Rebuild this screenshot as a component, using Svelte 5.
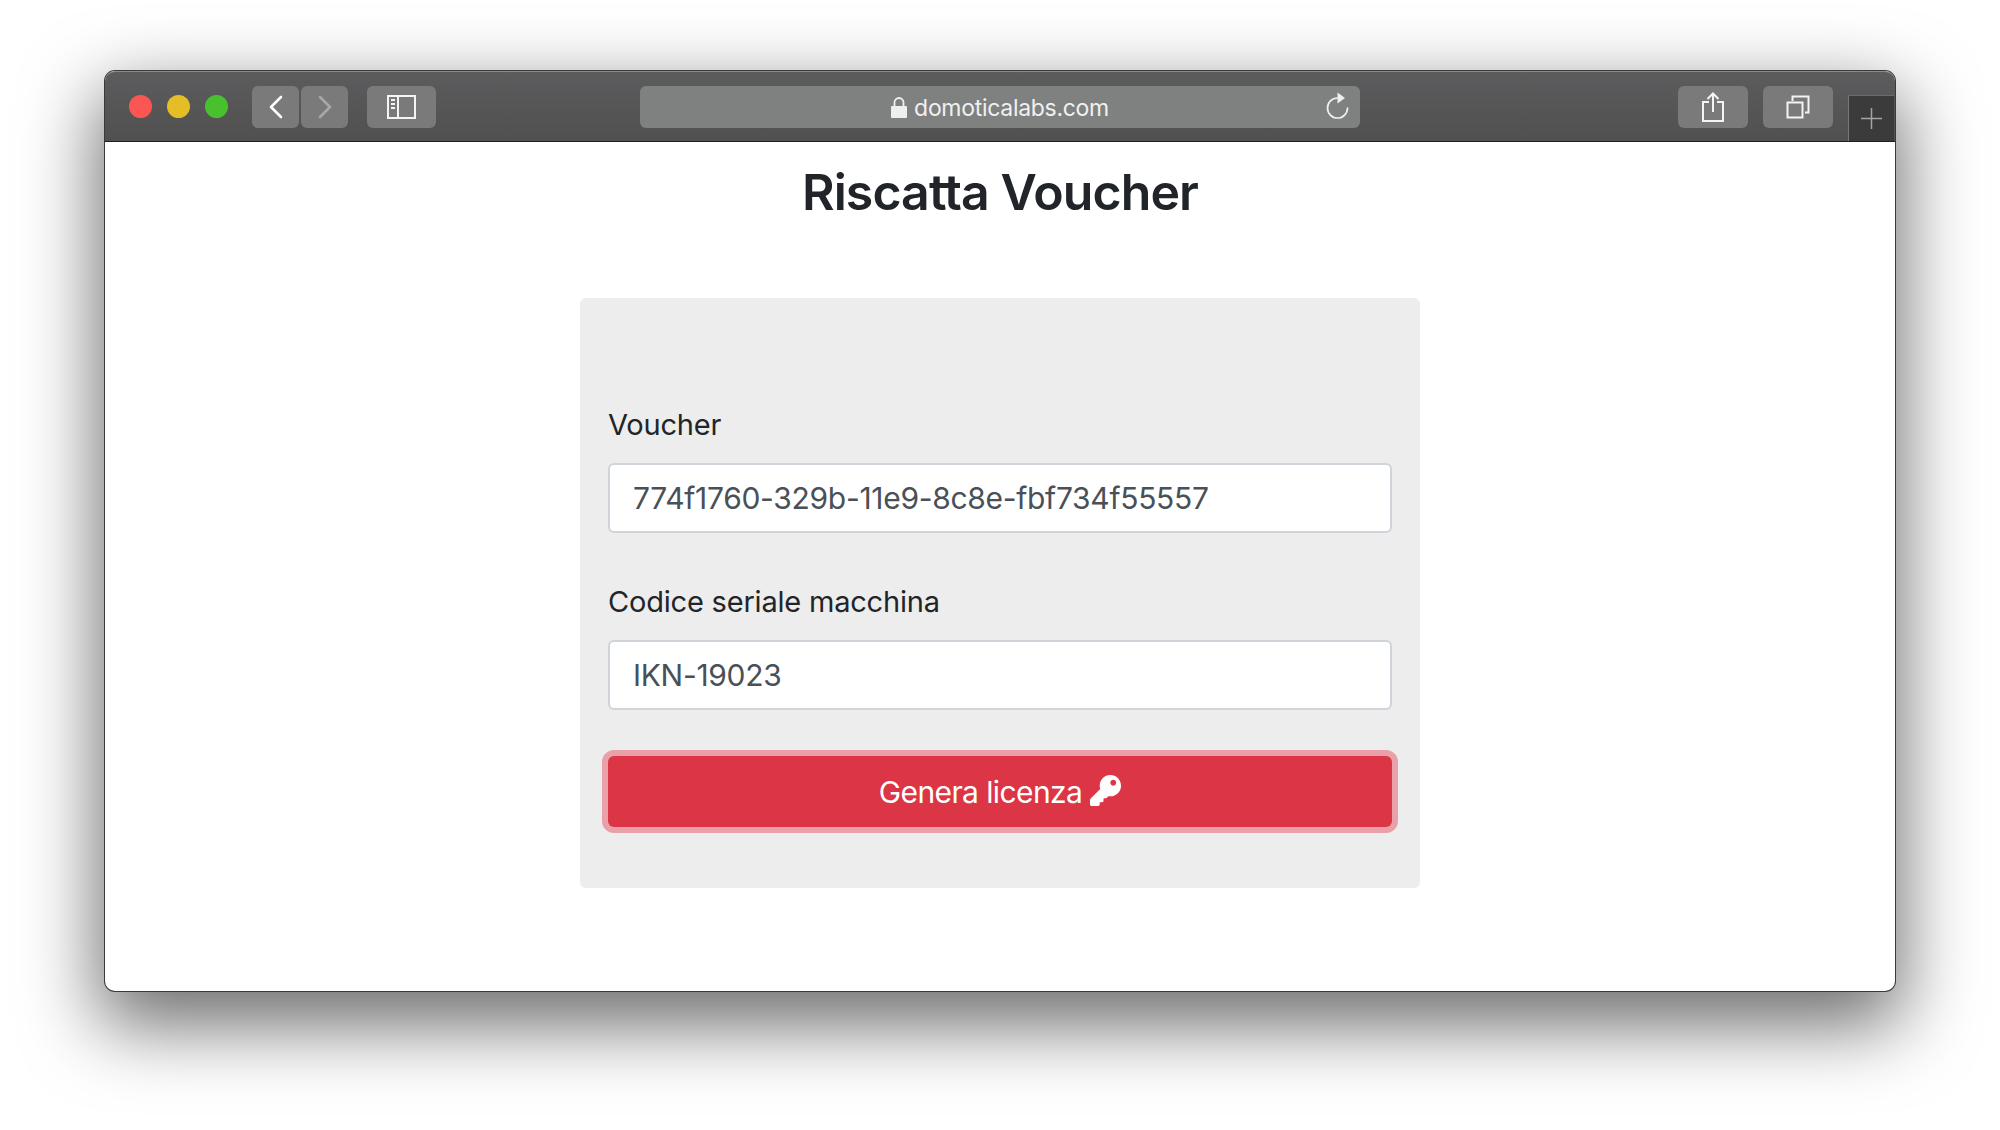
<script>
  let voucher = $state('774f1760-329b-11e9-8c8e-fbf734f55557');
  let serial = $state('IKN-19023');
</script>

<div class="window">
  <header class="bar">
    <div class="lights">
      <span class="light red"></span>
      <span class="light yellow"></span>
      <span class="light green"></span>
    </div>
    <div class="nav">
      <span class="tool nav-btn">
        <svg width="16" height="24" viewBox="0 0 16 24"><path d="M13 2 3 12l10 10" fill="none" stroke="#fff" stroke-width="2.6" stroke-linecap="round" stroke-linejoin="round"/></svg>
      </span>
      <span class="tool nav-btn">
        <svg width="16" height="24" viewBox="0 0 16 24"><path d="m3 2 10 10L3 22" fill="none" stroke="#a8a8a8" stroke-width="2.6" stroke-linecap="round" stroke-linejoin="round"/></svg>
      </span>
    </div>
    <span class="tool side-btn">
      <svg width="29" height="24" viewBox="0 0 29 24"><path d="M1 1h27v22H1zM11 1v22" fill="none" stroke="#f4f4f4" stroke-width="2"/><path d="M4 5h4M4 9h4M4 13h4" stroke="#f4f4f4" stroke-width="2"/></svg>
    </span>
    <div class="address">
      <svg class="lock" width="16" height="21" viewBox="0 0 16 21"><path d="M1 9h14a1 1 0 0 1 1 1v10a1 1 0 0 1-1 1H1a1 1 0 0 1-1-1V10a1 1 0 0 1 1-1z" fill="#efefef"/><path d="M3.5 9V5.5a4.5 4.5 0 0 1 9 0V9" fill="none" stroke="#efefef" stroke-width="1.8"/></svg>
      <span class="host">domoticalabs.com</span>
      <svg class="reload" width="24" height="28" viewBox="0 0 24 28"><path d="M11.500 6A10 10 0 1 0 21.500 16" fill="none" stroke="#efefef" stroke-width="1.7" stroke-linecap="round"/><path d="M11.500.5l7.500 5.500-7.500 5.500z" fill="#efefef"/></svg>
    </div>
    <span class="tool right-btn">
      <svg width="22" height="30" viewBox="0 0 22 30"><path d="M7 10H1v19h20V10h-6M11 20V2M5.500 7 11 1.500 16.500 7" fill="none" stroke="#f4f4f4" stroke-width="2"/></svg>
    </span>
    <span class="tool right-btn">
      <svg width="24" height="24" viewBox="0 0 24 24"><path d="M1.500 7.500h15v15h-15z" fill="none" stroke="#f4f4f4" stroke-width="2"/><path d="M6.500 6V1.500h16v16H19" fill="none" stroke="#f4f4f4" stroke-width="2"/></svg>
    </span>
    <span class="new-tab">
      <svg width="21" height="21" viewBox="0 0 21 21"><path d="M0 10.500h21M10.500 0v21" stroke="#a5a5a5" stroke-width="1.500"/></svg>
    </span>
  </header>

  <main class="page">
    <h1>Riscatta Voucher</h1>
    <form class="card" onsubmit={(e) => e.preventDefault()}>
      <div class="group first">
        <label for="voucher">Voucher</label>
        <input id="voucher" bind:value={voucher} />
      </div>
      <div class="group">
        <label for="serial">Codice seriale macchina</label>
        <input id="serial" bind:value={serial} />
      </div>
      <button type="submit">
        Genera licenza
        <svg class="key" width="31" height="31" viewBox="0 0 512 512"><path fill="#fff" d="M512 176.001C512 273.203 433.202 352 336 352c-11.22 0-22.19-1.062-32.827-3.069l-24.012 27.014A23.999 23.999 0 0 1 261.223 384H224v40c0 13.255-10.745 24-24 24h-40v40c0 13.255-10.745 24-24 24H24c-13.255 0-24-10.745-24-24v-78.059c0-6.365 2.529-12.47 7.029-16.971l161.802-161.802C163.108 213.814 160 195.271 160 176 160 78.798 238.797.001 335.999 0 433.488-.001 512 78.511 512 176.001zM336 128c0 26.51 21.49 48 48 48s48-21.49 48-48-21.49-48-48-48-48 21.49-48 48z"/></svg>
      </button>
    </form>
  </main>
</div>

<style>
  :global(body) {
    margin: 0;
    background: #fff;
    font-family: Inter, "Liberation Sans", sans-serif;
  }
  .window {
    box-sizing: border-box;
    width: 1790px;
    height: 920px;
    margin: 71px 105px 139px;
    border-radius: 10px;
    background: #fff;
    box-shadow: 0 0 0 1px #3a3a3a, 0 28px 76px 6px rgba(0, 0, 0, 0.58);
  }
  .bar {
    box-sizing: border-box;
    height: 71px;
    display: flex;
    align-items: flex-start;
    padding-top: 14px;
    border-radius: 10px 10px 0 0;
    background: linear-gradient(#5c5c5e, #505050);
    border-top: 1px solid #8a8a8a;
    border-bottom: 1px solid #1e1e1e;
  }
  .lights {
    display: flex;
    gap: 15px;
    padding: 9px 0 0 24px;
    width: 147px;
    box-sizing: border-box;
  }
  .light {
    width: 23px;
    height: 23px;
    border-radius: 50%;
  }
  .red { background: #fc5652; }
  .yellow { background: #e5bd27; }
  .green { background: #49c12f; }
  .nav {
    display: flex;
    gap: 2px;
    margin-right: 19px;
  }
  .tool {
    height: 42px;
    display: flex;
    align-items: center;
    justify-content: center;
    border-radius: 6px;
    background: #7a7a7b;
  }
  .nav-btn { width: 47px; }
  .side-btn { width: 69px; }
  .address {
    position: relative;
    box-sizing: border-box;
    width: 720px;
    height: 42px;
    margin: 0 318px 0 204px;
    display: flex;
    align-items: center;
    justify-content: center;
    gap: 7px;
    border-radius: 6px;
    background: #7f8080;
    color: #f0f0f0;
    font-size: 23px;
    letter-spacing: -0.3px;
  }
  .host { line-height: 42px; padding-top: 2px; }
  .reload {
    position: absolute;
    right: 10px;
    top: 6px;
  }
  .right-btn {
    width: 70px;
    margin-right: 15px;
  }
  .new-tab {
    box-sizing: border-box;
    width: 46px;
    height: 46px;
    margin-top: 9px;
    display: flex;
    align-items: center;
    justify-content: center;
    background: #3b3b3b;
    border-left: 1px solid #787878;
    border-top: 1px solid #6c6c6c;
  }
  .page {
    height: 849px;
    padding-top: 21px;
    box-sizing: border-box;
    overflow: hidden;
  }
  h1 {
    margin: 0 0 76px;
    text-align: center;
    font-size: 50px;
    line-height: 59px;
    font-weight: 600;
    letter-spacing: -0.9px;
    color: #212529;
  }
  .card {
    box-sizing: border-box;
    width: 840px;
    height: 590px;
    margin: 0 auto;
    padding: 109px 28px 60px;
    border-radius: 6px;
    background: #ededed;
    display: flex;
    flex-direction: column;
  }
  .group {
    display: flex;
    flex-direction: column;
    gap: 20px;
    margin-bottom: 46px;
  }
  .first {
    margin-bottom: 51px;
  }
  label {
    font-size: 29px;
    line-height: 36px;
    letter-spacing: -0.2px;
    color: #212529;
  }
  input {
    box-sizing: border-box;
    width: 100%;
    height: 70px;
    padding: 0 23px;
    border: 2px solid #ced4da;
    border-radius: 6px;
    background: #fff;
    color: #495057;
    font: 400 30px Inter, "Liberation Sans", sans-serif;
    letter-spacing: -0.3px;
    outline: none;
  }
  button {
    box-sizing: border-box;
    height: 71px;
    border: 0;
    border-radius: 6px;
    background: #dc3545;
    color: #fff;
    box-shadow: 0 0 0 6px #e9a0a8;
    font: 400 30px Inter, "Liberation Sans", sans-serif;
    letter-spacing: -0.6px;
    display: flex;
    align-items: center;
    justify-content: center;
    gap: 8px;
    padding: 0;
  }
  .key { margin-top: -2px; }
</style>
